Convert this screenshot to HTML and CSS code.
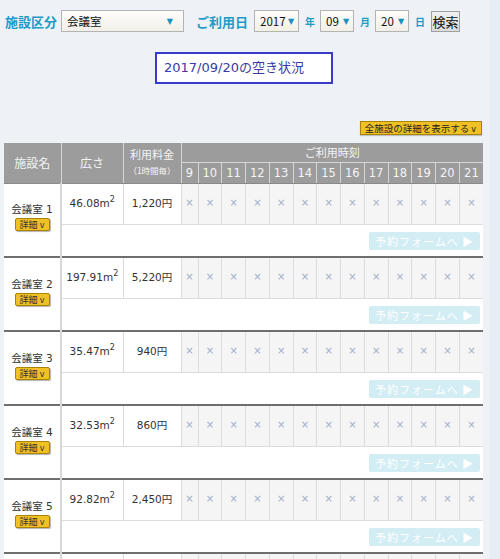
FILE: index.html
```html
<!DOCTYPE html>
<html lang="ja">
<head>
<meta charset="utf-8">
<link rel="stylesheet" href="styles.css">
</head>
<body>
<div class="page">
  <div class="search">
    <span class="label">施設区分</span>
    <div class="sel sel-type"><span>会議室</span><span class="arr">▼</span></div>
    <span class="label label-date">ご利用日</span>
    <div class="sel sel-year"><span>2017</span><span class="arr">▼</span></div>
    <span class="unit">年</span>
    <div class="sel sel-md"><span>09</span><span class="arr">▼</span></div>
    <span class="unit">月</span>
    <div class="sel sel-md"><span>20</span><span class="arr">▼</span></div>
    <span class="unit">日</span>
    <button class="search-btn">検索</button>
  </div>
  <div class="title">2017/09/20の空き状況</div>
  <div class="toolbar"><button class="all-detail">全施設の詳細を表示する <span class="v">v</span></button></div>
  <table class="grid">
    <colgroup>
      <col class="c-name"><col class="c-area"><col class="c-fee"><col class="c-h9">
      <col class="c-h"><col class="c-h"><col class="c-h"><col class="c-h"><col class="c-h"><col class="c-h">
      <col class="c-h"><col class="c-h"><col class="c-h"><col class="c-h"><col class="c-h"><col class="c-h">
    </colgroup>
    <thead>
      <tr class="h1">
        <th rowspan="2">施設名</th>
        <th rowspan="2">広さ</th>
        <th rowspan="2" class="fee-h">利用料金<br><span class="small">（1時間毎）</span></th>
        <th colspan="13" class="time-h">ご利用時刻</th>
      </tr>
      <tr class="h2">
        <th>9</th><th>10</th><th>11</th><th>12</th><th>13</th><th>14</th><th>15</th><th>16</th><th>17</th><th>18</th><th>19</th><th>20</th><th>21</th>
      </tr>
    </thead>
    <tbody>
      <tr class="top">
        <td rowspan="2" class="name"><div>会議室 1</div><button class="detail">詳細 <span class="v">v</span></button></td>
        <td class="val">46.08m<sup>2</sup></td><td class="val">1,220円</td>
        <td class="x">×</td><td class="x">×</td><td class="x">×</td><td class="x">×</td><td class="x">×</td><td class="x">×</td><td class="x">×</td><td class="x">×</td><td class="x">×</td><td class="x">×</td><td class="x">×</td><td class="x">×</td><td class="x">×</td>
      </tr>
      <tr class="bottom"><td colspan="15" class="act"><button class="reserve">予約フォームへ ▶</button></td></tr>
    </tbody>
    <tbody>
      <tr class="top">
        <td rowspan="2" class="name"><div>会議室 2</div><button class="detail">詳細 <span class="v">v</span></button></td>
        <td class="val">197.91m<sup>2</sup></td><td class="val">5,220円</td>
        <td class="x">×</td><td class="x">×</td><td class="x">×</td><td class="x">×</td><td class="x">×</td><td class="x">×</td><td class="x">×</td><td class="x">×</td><td class="x">×</td><td class="x">×</td><td class="x">×</td><td class="x">×</td><td class="x">×</td>
      </tr>
      <tr class="bottom"><td colspan="15" class="act"><button class="reserve">予約フォームへ ▶</button></td></tr>
    </tbody>
    <tbody>
      <tr class="top">
        <td rowspan="2" class="name"><div>会議室 3</div><button class="detail">詳細 <span class="v">v</span></button></td>
        <td class="val">35.47m<sup>2</sup></td><td class="val">940円</td>
        <td class="x">×</td><td class="x">×</td><td class="x">×</td><td class="x">×</td><td class="x">×</td><td class="x">×</td><td class="x">×</td><td class="x">×</td><td class="x">×</td><td class="x">×</td><td class="x">×</td><td class="x">×</td><td class="x">×</td>
      </tr>
      <tr class="bottom"><td colspan="15" class="act"><button class="reserve">予約フォームへ ▶</button></td></tr>
    </tbody>
    <tbody>
      <tr class="top">
        <td rowspan="2" class="name"><div>会議室 4</div><button class="detail">詳細 <span class="v">v</span></button></td>
        <td class="val">32.53m<sup>2</sup></td><td class="val">860円</td>
        <td class="x">×</td><td class="x">×</td><td class="x">×</td><td class="x">×</td><td class="x">×</td><td class="x">×</td><td class="x">×</td><td class="x">×</td><td class="x">×</td><td class="x">×</td><td class="x">×</td><td class="x">×</td><td class="x">×</td>
      </tr>
      <tr class="bottom"><td colspan="15" class="act"><button class="reserve">予約フォームへ ▶</button></td></tr>
    </tbody>
    <tbody>
      <tr class="top">
        <td rowspan="2" class="name"><div>会議室 5</div><button class="detail">詳細 <span class="v">v</span></button></td>
        <td class="val">92.82m<sup>2</sup></td><td class="val">2,450円</td>
        <td class="x">×</td><td class="x">×</td><td class="x">×</td><td class="x">×</td><td class="x">×</td><td class="x">×</td><td class="x">×</td><td class="x">×</td><td class="x">×</td><td class="x">×</td><td class="x">×</td><td class="x">×</td><td class="x">×</td>
      </tr>
      <tr class="bottom"><td colspan="15" class="act"><button class="reserve">予約フォームへ ▶</button></td></tr>
    </tbody>
    <tbody>
      <tr class="top">
        <td class="name"></td>
        <td class="val"></td><td class="val"></td>
        <td class="x"></td><td class="x"></td><td class="x"></td><td class="x"></td><td class="x"></td><td class="x"></td><td class="x"></td><td class="x"></td><td class="x"></td><td class="x"></td><td class="x"></td><td class="x"></td><td class="x"></td>
      </tr>
    </tbody>
  </table>
</div>
</body>
</html>
```
FILE: styles.css
```css
html, body {
  margin: 0;
  padding: 0;
}
body {
  background: #e6edf5;
  font-family: "DejaVu Sans", "Noto Sans CJK JP", sans-serif;
  color: #333;
  overflow: hidden;
}
.page {
  width: 490px;
  background: #eef2f6;
  height: 559px;
  overflow: hidden;
}
.search {
  display: flex;
  align-items: center;
  height: 22px;
  padding: 10px 0 0 5px;
}
.label {
  font-family: "Noto Sans CJK JP", sans-serif;
  font-weight: bold;
  font-size: 13px;
  color: #1e9bc7;
  margin-right: 4px;
}
.label-date {
  margin-left: 12px;
  margin-right: 6px;
}
.sel {
  box-sizing: border-box;
  height: 22px;
  border: 1px solid #b4b4b4;
  background: linear-gradient(#fdfdfb, #f2efe7);
  display: flex;
  align-items: center;
  justify-content: space-between;
  font-family: "Noto Sans CJK JP", sans-serif;
  font-size: 11.5px;
  color: #111;
  padding: 0 4px 0 5px;
}
.sel-type { width: 123px; padding-left: 5px; }
.sel-type .arr { margin-right: 6px; }
.sel-year { width: 45px; }
.sel-md { width: 34px; }
.arr {
  color: #1a8fc0;
  font-size: 8px;
  font-family: "DejaVu Sans", sans-serif;
}
.unit {
  font-family: "Noto Sans CJK JP", sans-serif;
  font-weight: bold;
  font-size: 10px;
  color: #1e9bc7;
  margin: 0 5px 0 6px;
}
.search-btn {
  box-sizing: border-box;
  height: 21px;
  width: 29px;
  padding: 0;
  margin-left: 1px;
  border: 1px solid #a0a0a0;
  background: linear-gradient(#f0f0f0, #dcdcdc);
  font-family: "Noto Sans CJK JP", sans-serif;
  font-size: 13px;
  color: #111;
  line-height: 19px;
}
.title {
  box-sizing: border-box;
  width: 178px;
  height: 32px;
  margin: 20px 0 0 155px;
  border: 2px solid #3a3acb;
  background: #fff;
  color: #3a3aa8;
  font-size: 13px;
  line-height: 28px;
  padding-left: 7px;
  font-family: "DejaVu Sans", "Noto Sans CJK JP", sans-serif;
}
.toolbar {
  display: flex;
  justify-content: flex-end;
  padding: 37px 8px 0 0;
  height: 14px;
}
.all-detail {
  box-sizing: border-box;
  height: 14px;
  padding: 0 5px 0 4px;
  border: 1px solid #a88400;
  background: #f0c124;
  font-family: "Noto Sans CJK JP", sans-serif;
  font-size: 9.5px;
  line-height: 12px;
  color: #222;
  box-shadow: 0 1px 1px rgba(0,0,0,.2);
}
.v { font-family: "DejaVu Sans", sans-serif; font-size: 8px; }
.grid {
  margin: 8px 0 0 4px;
  border-collapse: collapse;
  table-layout: fixed;
  width: 479px;
}
.c-name { width: 57px; }
.c-area { width: 62px; }
.c-fee { width: 58px; }
.c-h9 { width: 17px; }
.c-h { width: 23.75px; }
th {
  background: #9c9c9c;
  color: #f4f4f4;
  font-weight: normal;
  border: 1px solid #d6d6d6;
  border-top: none;
  font-family: "Noto Sans CJK JP", sans-serif;
  font-size: 12px;
  padding: 0;
}
thead tr:first-child th:first-child { border-left: none; }
.h1 { height: 19px; }
.h2 { height: 21px; }
.h2 th {
  font-family: "DejaVu Sans", sans-serif;
  font-size: 11.5px;
  border-bottom: 1px solid #8a8a8a;
}
.time-h { font-size: 11px; line-height: 17px; border-right: none; }
.h2 th:last-child { border-right: none; }
.fee-h { font-size: 11px; line-height: 15px; }
.fee-h .small { font-size: 8.5px; }
thead th[rowspan] { border-bottom: 1px solid #8a8a8a; }
tbody { border-bottom: 2px solid #6e6e6e; }
td {
  padding: 0;
  border: 1px solid #dcdcdc;
  background: #fff;
  text-align: center;
}
.top { height: 41px; }
.bottom { height: 33px; }
.name {
  font-family: "DejaVu Sans", "Noto Sans CJK JP", sans-serif;
  font-size: 10.5px;
  color: #333;
  border-left: none;
  border-right: 2px solid #d8d8d8;
  vertical-align: middle;
  padding-bottom: 6px;
}
.name div { line-height: 14px; margin-bottom: 2px; }
.detail {
  box-sizing: border-box;
  width: 35px;
  height: 13px;
  padding: 0;
  border: 1px solid #a88400;
  border-radius: 2px;
  background: #f0c124;
  font-family: "Noto Sans CJK JP", sans-serif;
  font-size: 9px;
  line-height: 11px;
  color: #333;
  box-shadow: 1px 1px 1px rgba(0,0,0,.3);
}
.val {
  font-size: 10.5px;
  color: #333;
  font-family: "DejaVu Sans", "Noto Sans CJK JP", sans-serif;
  padding-bottom: 2px;
}
.val sup { font-size: 8px; line-height: 0; vertical-align: 5px; }
.x {
  background: #f5f5f5;
  color: #a4acc8;
  font-size: 10px;
  font-family: "DejaVu Sans", sans-serif;
  padding-bottom: 2px;
}
.x:last-child { border-right: none; }
.act {
  text-align: right;
  border-right: none;
  padding-right: 3px;
  vertical-align: middle;
}
.reserve {
  box-sizing: border-box;
  width: 111px;
  height: 18px;
  border: none;
  border-radius: 2px;
  background: #d2edf4;
  color: #fff;
  font-family: "Noto Sans CJK JP", sans-serif;
  font-size: 11px;
  letter-spacing: 1px;
  padding: 0;
  line-height: 18px;
}
```
